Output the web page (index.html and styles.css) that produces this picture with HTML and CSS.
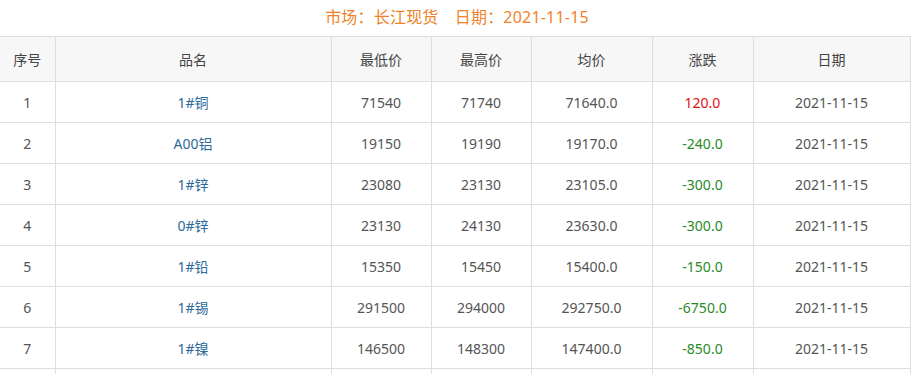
FILE: index.html
```html
<!DOCTYPE html>
<html lang="zh-CN">
<head>
<meta charset="utf-8">
<link rel="stylesheet" href="styles.css">
</head>
<body>
<div class="title">市场：长江现货　日期：2021-11-15</div>
<table class="prices">
  <colgroup>
    <col class="c1"><col class="c2"><col class="c3"><col class="c4"><col class="c5"><col class="c6"><col class="c7">
  </colgroup>
  <thead>
    <tr><th>序号</th><th>品名</th><th>最低价</th><th>最高价</th><th>均价</th><th>涨跌</th><th>日期</th></tr>
  </thead>
  <tbody>
    <tr><td>1</td><td class="name">1#铜</td><td>71540</td><td>71740</td><td>71640.0</td><td class="up">120.0</td><td>2021-11-15</td></tr>
    <tr><td>2</td><td class="name">A00铝</td><td>19150</td><td>19190</td><td>19170.0</td><td class="down">-240.0</td><td>2021-11-15</td></tr>
    <tr><td>3</td><td class="name">1#锌</td><td>23080</td><td>23130</td><td>23105.0</td><td class="down">-300.0</td><td>2021-11-15</td></tr>
    <tr><td>4</td><td class="name">0#锌</td><td>23130</td><td>24130</td><td>23630.0</td><td class="down">-300.0</td><td>2021-11-15</td></tr>
    <tr><td>5</td><td class="name">1#铅</td><td>15350</td><td>15450</td><td>15400.0</td><td class="down">-150.0</td><td>2021-11-15</td></tr>
    <tr><td>6</td><td class="name">1#锡</td><td>291500</td><td>294000</td><td>292750.0</td><td class="down">-6750.0</td><td>2021-11-15</td></tr>
    <tr><td>7</td><td class="name">1#镍</td><td>146500</td><td>148300</td><td>147400.0</td><td class="down">-850.0</td><td>2021-11-15</td></tr>
    <tr><td></td><td></td><td></td><td></td><td></td><td></td><td></td></tr>
  </tbody>
</table>
</body>
</html>
```
FILE: styles.css
```css
html, body {
  margin: 0;
  padding: 0;
  background: #fff;
  overflow: hidden;
}
body {
  font-family: "Noto Sans", "Noto Sans CJK SC", sans-serif;
  color: #555;
  font-size: 14px;
}
.title {
  height: 36px;
  line-height: 34px;
  text-align: center;
  color: #f0822a;
  font-size: 16px;
  letter-spacing: 0.2px;
}
.prices {
  border-collapse: collapse;
  table-layout: fixed;
  width: 910px;
}
.c1 { width: 55px; }
.c2 { width: 276px; }
.c3 { width: 100px; }
.c4 { width: 100px; }
.c5 { width: 121px; }
.c6 { width: 101px; }
.c7 { width: 157px; }
.prices th,
.prices td {
  border: 1px solid #dedede;
  text-align: center;
  padding: 0;
  font-weight: normal;
}
.prices tr > :first-child {
  border-left: none;
}
.prices th {
  height: 44px;
  background: #f7f7f7;
  color: #444;
}
.prices td {
  height: 40px;
}
.prices .name {
  color: #2d6a9a;
}
.prices .up {
  color: #e01010;
}
.prices .down {
  color: #2a8a2a;
}
```
